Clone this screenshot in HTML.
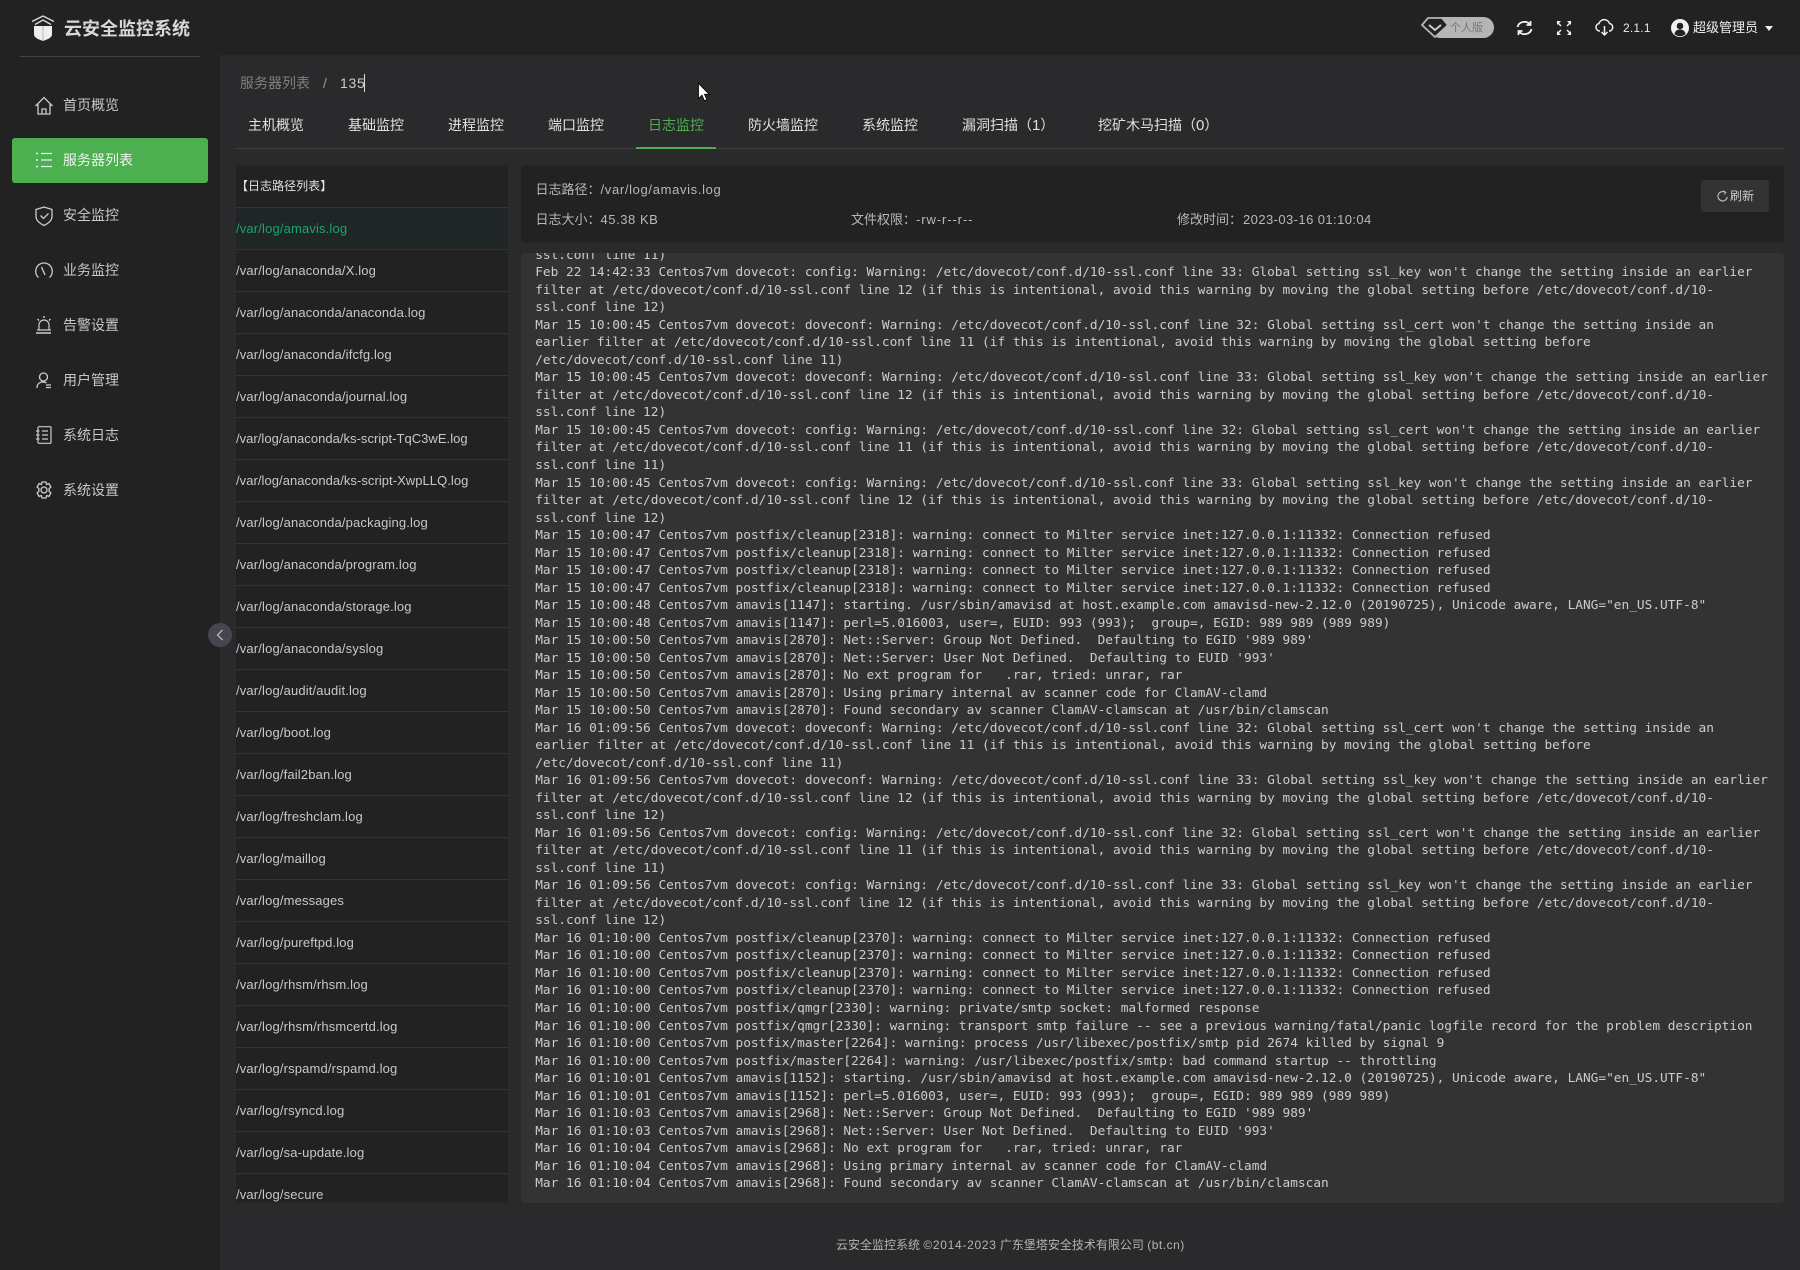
<!DOCTYPE html>
<html lang="zh-CN">
<head>
<meta charset="utf-8">
<title>云安全监控系统</title>
<style>
html,body{margin:0;padding:0;width:1800px;height:1270px;overflow:hidden;background:#2a2a2c}
body{position:relative;font-family:"Liberation Sans","Noto Sans CJK SC",sans-serif;color:#ccc;font-size:14px}
.a{position:absolute;white-space:nowrap}
svg{position:absolute;overflow:visible}
.nav{position:absolute;left:63px;height:20px;line-height:20px;font-size:14px;color:#c8c8c8;white-space:nowrap}
.tab{position:absolute;top:115px;height:20px;line-height:21px;font-size:14px;color:#e0e0e0;white-space:nowrap}
.row{position:absolute;left:0;width:272px;height:41px;line-height:41px;border-bottom:1px solid #333;font-size:13px;color:#c8c8c8;white-space:nowrap;letter-spacing:.15px}
pre{position:absolute;left:14.2px;top:-6.2px;margin:0;font:12.8px/17.51px "DejaVu Sans Mono","Liberation Mono",monospace;color:#ccc;white-space:pre}
</style>
</head>
<body>
<!-- top + sidebar -->
<div class="a" style="left:0;top:0;width:1800px;height:55px;background:#222"></div>
<div class="a" style="left:0;top:0;width:220px;height:1270px;background:#222"></div>
<div class="a" style="left:20px;top:56px;width:180px;height:1px;background:#444"></div>

<svg style="left:30px;top:14px" width="26" height="28" viewBox="0 0 26 28" fill="none">
<path d="M2 7.500 13 2l11 5.500M5 10.500 13 6l8 4.500" stroke="#ddd" stroke-width="1.300"/>
<path d="M4 12h18v8.500c0 3-4.500 5-9 6.500-4.500-1.500-9-3.500-9-6.500z" fill="#eee"/>
<path d="M13 12v15" stroke="#999" stroke-width=".6"/>
</svg>
<div class="a" style="left:64px;top:16px;font-size:18px;line-height:26px;font-weight:700;color:#d8d8d8">云安全监控系统</div>

<div class="a" style="left:12px;top:138px;width:196px;height:45px;background:#4caf50;border-radius:3px"></div>

<svg style="left:34px;top:96px" width="20" height="20" viewBox="0 0 20 20" fill="none" stroke="#ccc" stroke-width="1.300"><path d="M1.500 10 10 1.500 18.500 10M4 8v10h12V8M8 18v-5h4v5"/></svg>
<svg style="left:35px;top:151px" width="18" height="18" viewBox="0 0 18 18" fill="none" stroke="#eef" stroke-width="1.300"><path d="M6 2.500h11M6 9h11M6 15.500h11"/><path d="M1 2.500h2M1 9h2M1 15.500h2" stroke-width="1.600"/></svg>
<svg style="left:35px;top:206px" width="18" height="20" viewBox="0 0 18 20" fill="none" stroke="#ccc" stroke-width="1.300"><path d="M9 1 17 3.500v7c0 4-4 7-8 9-4-2-8-5-8-9v-7z"/><path d="m5.500 9.500 3 3 5-5"/></svg>
<svg style="left:35px;top:262px" width="18" height="17" viewBox="0 0 18 17" fill="none" stroke="#ccc" stroke-width="1.300"><path d="M3.500 15.500A8.300 8.300 0 1 1 14.500 15.500"/><path d="M6.500 5 10 13"/></svg>
<svg style="left:36px;top:316px" width="16" height="18" viewBox="0 0 16 18" fill="none" stroke="#ccc" stroke-width="1.200"><path d="M3 14V9a5 5 0 0 1 10 0v5M1 14h14"/><path d="M0 17h15M8 0v2M1.500 3l1.500 1.500M14.500 3 13 4.500" stroke-width="1.400"/></svg>
<svg style="left:36px;top:372px" width="16" height="17" viewBox="0 0 16 17" fill="none" stroke="#ccc" stroke-width="1.300"><circle cx="7.500" cy="5" r="4"/><path d="M1 16c0-4 2.500-6 6-6 1.500 0 2.500.3 3.500 1"/><path d="M10 13h5M10 15.500h5"/></svg>
<svg style="left:36px;top:426px" width="16" height="18" viewBox="0 0 16 18" fill="none" stroke="#ccc" stroke-width="1.200"><rect x="2" y=".7" width="13" height="16.600" rx="1"/><path d="M6 5h6M6 9h6M6 13h6M0 5h3.500M0 9h3.500M0 13h3.500"/></svg>
<svg style="left:35px;top:481px" width="18" height="18" viewBox="0 0 18 18" fill="none" stroke="#ccc" stroke-width="1.300"><path d="M7 1h4l.6 2.400 2.300-.8 2 3.400-1.800 1.700v2.600l1.800 1.700-2 3.400-2.300-.8L11 17H7l-.6-2.400-2.300.8-2-3.400 1.800-1.700V7.700L2.100 6l2-3.400 2.300.8z"/><circle cx="9" cy="9" r="3"/></svg>

<div class="nav" style="top:95px">首页概览</div>
<div class="nav" style="top:150px;color:#f2f2f2">服务器列表</div>
<div class="nav" style="top:205px">安全监控</div>
<div class="nav" style="top:260px">业务监控</div>
<div class="nav" style="top:315px">告警设置</div>
<div class="nav" style="top:370px">用户管理</div>
<div class="nav" style="top:425px">系统日志</div>
<div class="nav" style="top:480px">系统设置</div>

<div class="a" style="left:208px;top:623px;width:24px;height:24px;border-radius:50%;background:#46464e"></div>
<svg style="left:216px;top:629px" width="8" height="12" viewBox="0 0 8 12" fill="none" stroke="#ccc" stroke-width="1.100"><path d="M6.500 1 1.500 6l5 5"/></svg>

<!-- top right -->
<div class="a" style="left:1430px;top:17px;width:64px;height:21px;border-radius:11px;background:#b5b5b5"></div>
<svg style="left:1421px;top:16px" width="28" height="23" viewBox="0 0 28 23"><path d="M7 2h14l6 7-13 12L1 9z" fill="#222" stroke="#b5b5b5" stroke-width="1.800"/><path d="m8 9 6 5 6-5" fill="none" stroke="#ccc" stroke-width="2"/></svg>
<div class="a" style="left:1450px;top:20px;font-size:11px;line-height:17px;color:#777">个人版</div>
<svg style="left:1516px;top:20px" width="17" height="16" viewBox="0 0 17 16" fill="none" stroke="#f0f0f0" stroke-width="1.800"><path d="M1.500 7A7 6.500 0 0 1 14 4.500M15.500 9A7 6.500 0 0 1 3 11.500"/><path d="M14.500 1v4h-4M2.500 15v-4h4"/></svg>
<svg style="left:1557px;top:21px" width="14" height="14" viewBox="0 0 14 14" fill="none" stroke="#f0f0f0" stroke-width="1.500"><path d="M0 1l4 4M14 1l-4 4M0 13l4-4M14 13l-4-4"/><path d="M0 0h4L0 4zM14 0h-4l4 4zM0 14h4l-4-4zM14 14h-4l4-4z" fill="#f0f0f0" stroke="none"/></svg>
<svg style="left:1595px;top:19px" width="19" height="17" viewBox="0 0 19 17" fill="none" stroke="#f0f0f0" stroke-width="1.500"><path d="M5 12H4.500a3.800 3.800 0 0 1-.5-7.500 5.500 5.500 0 0 1 10.500 0 3.800 3.800 0 0 1 0 7.500H14"/><path d="M9.500 7v9M6.500 13l3 3 3-3"/></svg>
<div class="a" style="left:1623px;top:19px;font-size:12px;line-height:18px;color:#e8e8e8;letter-spacing:.2px">2.1.1</div>
<svg style="left:1671px;top:19px" width="18" height="18" viewBox="0 0 18 18"><circle cx="9" cy="9" r="9" fill="#f2f2f2"/><circle cx="9" cy="7" r="3.300" fill="#222"/><path d="M3.500 15c.5-3 2.500-4.500 5.500-4.500s5 1.500 5.500 4.500A8 8 0 0 1 3.500 15z" fill="#222"/></svg>
<div class="a" style="left:1693px;top:18px;font-size:13px;line-height:19px;color:#eee">超级管理员</div>
<svg style="left:1765px;top:26px" width="8" height="5" viewBox="0 0 8 5"><path d="M0 0h8L4 5z" fill="#eee"/></svg>

<!-- breadcrumb -->
<div class="a" style="left:240px;top:73px;font-size:14px;line-height:20px;color:#808080">服务器列表</div>
<div class="a" style="left:323px;top:73px;font-size:14px;line-height:20px;color:#999">/</div>
<div class="a" style="left:340px;top:73px;font-size:14px;line-height:20px;color:#ccc;letter-spacing:.7px">135</div>
<div class="a" style="left:364px;top:74px;width:1px;height:18px;background:#ddd"></div>
<svg style="left:698px;top:83px" width="12" height="19" viewBox="0 0 12 19"><path d="M.5.500v15l3.500-3.300 2.400 5.600 2.500-1-2.400-5.500h4.800z" fill="#fff" stroke="#000" stroke-width=".8"/></svg>

<!-- tabs -->
<div class="tab" style="left:248px">主机概览</div>
<div class="tab" style="left:348px">基础监控</div>
<div class="tab" style="left:448px">进程监控</div>
<div class="tab" style="left:548px">端口监控</div>
<div class="tab" style="left:648px;color:#4caf50">日志监控</div>
<div class="tab" style="left:748px">防火墙监控</div>
<div class="tab" style="left:862px">系统监控</div>
<div class="tab" style="left:962px">漏洞扫描（<span style="font-size:15px">1</span>）</div>
<div class="tab" style="left:1098px">挖矿木马扫描（<span style="font-size:15px">0</span>）</div>
<div class="a" style="left:236px;top:148px;width:1548px;height:1px;background:#3f3f3f"></div>
<div class="a" style="left:636px;top:147px;width:80px;height:2px;background:#4caf50"></div>

<!-- file list -->
<div class="a" style="left:236px;top:165px;width:272px;height:1038px;background:#222;overflow:hidden">
<div class="row" style="top:0;height:42px;line-height:42px;font-size:12px;color:#e0e0e0;letter-spacing:.03px">【日志路径列表】</div>
<div class="row" style="top:43px;background:#1f2625;color:#1ba56c">/var/log/amavis.log</div>
<div class="row" style="top:85px">/var/log/anaconda/X.log</div>
<div class="row" style="top:127px">/var/log/anaconda/anaconda.log</div>
<div class="row" style="top:169px">/var/log/anaconda/ifcfg.log</div>
<div class="row" style="top:211px">/var/log/anaconda/journal.log</div>
<div class="row" style="top:253px;letter-spacing:.03px">/var/log/anaconda/ks-script-TqC3wE.log</div>
<div class="row" style="top:295px;letter-spacing:.05px">/var/log/anaconda/ks-script-XwpLLQ.log</div>
<div class="row" style="top:337px">/var/log/anaconda/packaging.log</div>
<div class="row" style="top:379px">/var/log/anaconda/program.log</div>
<div class="row" style="top:421px">/var/log/anaconda/storage.log</div>
<div class="row" style="top:463px">/var/log/anaconda/syslog</div>
<div class="row" style="top:505px">/var/log/audit/audit.log</div>
<div class="row" style="top:547px">/var/log/boot.log</div>
<div class="row" style="top:589px">/var/log/fail2ban.log</div>
<div class="row" style="top:631px">/var/log/freshclam.log</div>
<div class="row" style="top:673px">/var/log/maillog</div>
<div class="row" style="top:715px">/var/log/messages</div>
<div class="row" style="top:757px">/var/log/pureftpd.log</div>
<div class="row" style="top:799px">/var/log/rhsm/rhsm.log</div>
<div class="row" style="top:841px">/var/log/rhsm/rhsmcertd.log</div>
<div class="row" style="top:883px">/var/log/rspamd/rspamd.log</div>
<div class="row" style="top:925px">/var/log/rsyncd.log</div>
<div class="row" style="top:967px">/var/log/sa-update.log</div>
<div class="row" style="top:1009px">/var/log/secure</div>
</div>

<!-- header box -->
<div class="a" style="left:521px;top:165px;width:1263px;height:78px;background:#222;border-radius:4px"></div>
<div class="a" style="left:535.5px;top:180px;font-size:13px;line-height:19px;color:#b8b8b8">日志路径：<span style="letter-spacing:.66px">/var/log/amavis.log</span></div>
<div class="a" style="left:535.5px;top:210px;font-size:13px;line-height:19px;color:#b8b8b8">日志大小：<span style="letter-spacing:.55px">45.38 KB</span></div>
<div class="a" style="left:851px;top:210px;font-size:13px;line-height:19px;color:#b8b8b8">文件权限：<span style="letter-spacing:.9px">-rw-r--r--</span></div>
<div class="a" style="left:1177px;top:210px;font-size:13px;line-height:19px;color:#b8b8b8">修改时间：<span style="letter-spacing:.42px;margin-left:1px">2023-03-16 01:10:04</span></div>
<div class="a" style="left:1701px;top:180px;width:68px;height:32px;background:#333;border-radius:3px"></div>
<svg style="left:1717px;top:190px" width="11" height="12" viewBox="0 0 11 12" fill="none" stroke="#bbb" stroke-width="1.100"><path d="M8.500 2.500A4.700 4.700 0 1 0 10.300 7"/><path d="M6.500.5 9 2.500 7 4.500" stroke-width=".8"/></svg>
<div class="a" style="left:1730px;top:187px;font-size:12px;line-height:18px;color:#ccc">刷新</div>

<!-- log -->
<div class="a" style="left:521px;top:253px;width:1263px;height:950px;background:#333;border-radius:4px;overflow:hidden">
<pre>ssl.conf line 11)
Feb 22 14:42:33 Centos7vm dovecot: config: Warning: /etc/dovecot/conf.d/10-ssl.conf line 33: Global setting ssl_key won't change the setting inside an earlier
filter at /etc/dovecot/conf.d/10-ssl.conf line 12 (if this is intentional, avoid this warning by moving the global setting before /etc/dovecot/conf.d/10-
ssl.conf line 12)
Mar 15 10:00:45 Centos7vm dovecot: doveconf: Warning: /etc/dovecot/conf.d/10-ssl.conf line 32: Global setting ssl_cert won't change the setting inside an
earlier filter at /etc/dovecot/conf.d/10-ssl.conf line 11 (if this is intentional, avoid this warning by moving the global setting before
/etc/dovecot/conf.d/10-ssl.conf line 11)
Mar 15 10:00:45 Centos7vm dovecot: doveconf: Warning: /etc/dovecot/conf.d/10-ssl.conf line 33: Global setting ssl_key won't change the setting inside an earlier
filter at /etc/dovecot/conf.d/10-ssl.conf line 12 (if this is intentional, avoid this warning by moving the global setting before /etc/dovecot/conf.d/10-
ssl.conf line 12)
Mar 15 10:00:45 Centos7vm dovecot: config: Warning: /etc/dovecot/conf.d/10-ssl.conf line 32: Global setting ssl_cert won't change the setting inside an earlier
filter at /etc/dovecot/conf.d/10-ssl.conf line 11 (if this is intentional, avoid this warning by moving the global setting before /etc/dovecot/conf.d/10-
ssl.conf line 11)
Mar 15 10:00:45 Centos7vm dovecot: config: Warning: /etc/dovecot/conf.d/10-ssl.conf line 33: Global setting ssl_key won't change the setting inside an earlier
filter at /etc/dovecot/conf.d/10-ssl.conf line 12 (if this is intentional, avoid this warning by moving the global setting before /etc/dovecot/conf.d/10-
ssl.conf line 12)
Mar 15 10:00:47 Centos7vm postfix/cleanup[2318]: warning: connect to Milter service inet:127.0.0.1:11332: Connection refused
Mar 15 10:00:47 Centos7vm postfix/cleanup[2318]: warning: connect to Milter service inet:127.0.0.1:11332: Connection refused
Mar 15 10:00:47 Centos7vm postfix/cleanup[2318]: warning: connect to Milter service inet:127.0.0.1:11332: Connection refused
Mar 15 10:00:47 Centos7vm postfix/cleanup[2318]: warning: connect to Milter service inet:127.0.0.1:11332: Connection refused
Mar 15 10:00:48 Centos7vm amavis[1147]: starting. /usr/sbin/amavisd at host.example.com amavisd-new-2.12.0 (20190725), Unicode aware, LANG="en_US.UTF-8"
Mar 15 10:00:48 Centos7vm amavis[1147]: perl=5.016003, user=, EUID: 993 (993);  group=, EGID: 989 989 (989 989)
Mar 15 10:00:50 Centos7vm amavis[2870]: Net::Server: Group Not Defined.  Defaulting to EGID '989 989'
Mar 15 10:00:50 Centos7vm amavis[2870]: Net::Server: User Not Defined.  Defaulting to EUID '993'
Mar 15 10:00:50 Centos7vm amavis[2870]: No ext program for   .rar, tried: unrar, rar
Mar 15 10:00:50 Centos7vm amavis[2870]: Using primary internal av scanner code for ClamAV-clamd
Mar 15 10:00:50 Centos7vm amavis[2870]: Found secondary av scanner ClamAV-clamscan at /usr/bin/clamscan
Mar 16 01:09:56 Centos7vm dovecot: doveconf: Warning: /etc/dovecot/conf.d/10-ssl.conf line 32: Global setting ssl_cert won't change the setting inside an
earlier filter at /etc/dovecot/conf.d/10-ssl.conf line 11 (if this is intentional, avoid this warning by moving the global setting before
/etc/dovecot/conf.d/10-ssl.conf line 11)
Mar 16 01:09:56 Centos7vm dovecot: doveconf: Warning: /etc/dovecot/conf.d/10-ssl.conf line 33: Global setting ssl_key won't change the setting inside an earlier
filter at /etc/dovecot/conf.d/10-ssl.conf line 12 (if this is intentional, avoid this warning by moving the global setting before /etc/dovecot/conf.d/10-
ssl.conf line 12)
Mar 16 01:09:56 Centos7vm dovecot: config: Warning: /etc/dovecot/conf.d/10-ssl.conf line 32: Global setting ssl_cert won't change the setting inside an earlier
filter at /etc/dovecot/conf.d/10-ssl.conf line 11 (if this is intentional, avoid this warning by moving the global setting before /etc/dovecot/conf.d/10-
ssl.conf line 11)
Mar 16 01:09:56 Centos7vm dovecot: config: Warning: /etc/dovecot/conf.d/10-ssl.conf line 33: Global setting ssl_key won't change the setting inside an earlier
filter at /etc/dovecot/conf.d/10-ssl.conf line 12 (if this is intentional, avoid this warning by moving the global setting before /etc/dovecot/conf.d/10-
ssl.conf line 12)
Mar 16 01:10:00 Centos7vm postfix/cleanup[2370]: warning: connect to Milter service inet:127.0.0.1:11332: Connection refused
Mar 16 01:10:00 Centos7vm postfix/cleanup[2370]: warning: connect to Milter service inet:127.0.0.1:11332: Connection refused
Mar 16 01:10:00 Centos7vm postfix/cleanup[2370]: warning: connect to Milter service inet:127.0.0.1:11332: Connection refused
Mar 16 01:10:00 Centos7vm postfix/cleanup[2370]: warning: connect to Milter service inet:127.0.0.1:11332: Connection refused
Mar 16 01:10:00 Centos7vm postfix/qmgr[2330]: warning: private/smtp socket: malformed response
Mar 16 01:10:00 Centos7vm postfix/qmgr[2330]: warning: transport smtp failure -- see a previous warning/fatal/panic logfile record for the problem description
Mar 16 01:10:00 Centos7vm postfix/master[2264]: warning: process /usr/libexec/postfix/smtp pid 2674 killed by signal 9
Mar 16 01:10:00 Centos7vm postfix/master[2264]: warning: /usr/libexec/postfix/smtp: bad command startup -- throttling
Mar 16 01:10:01 Centos7vm amavis[1152]: starting. /usr/sbin/amavisd at host.example.com amavisd-new-2.12.0 (20190725), Unicode aware, LANG="en_US.UTF-8"
Mar 16 01:10:01 Centos7vm amavis[1152]: perl=5.016003, user=, EUID: 993 (993);  group=, EGID: 989 989 (989 989)
Mar 16 01:10:03 Centos7vm amavis[2968]: Net::Server: Group Not Defined.  Defaulting to EGID '989 989'
Mar 16 01:10:03 Centos7vm amavis[2968]: Net::Server: User Not Defined.  Defaulting to EUID '993'
Mar 16 01:10:04 Centos7vm amavis[2968]: No ext program for   .rar, tried: unrar, rar
Mar 16 01:10:04 Centos7vm amavis[2968]: Using primary internal av scanner code for ClamAV-clamd
Mar 16 01:10:04 Centos7vm amavis[2968]: Found secondary av scanner ClamAV-clamscan at /usr/bin/clamscan</pre>
</div>

<!-- footer -->
<div class="a" style="left:836px;top:1236px;font-size:12px;line-height:18px;color:#b4b4b4">云安全监控系统 <span style="letter-spacing:.7px">©2014-2023</span> 广东堡塔安全技术有限公司 <span style="letter-spacing:.5px">(bt.cn)</span></div>
</body>
</html>
